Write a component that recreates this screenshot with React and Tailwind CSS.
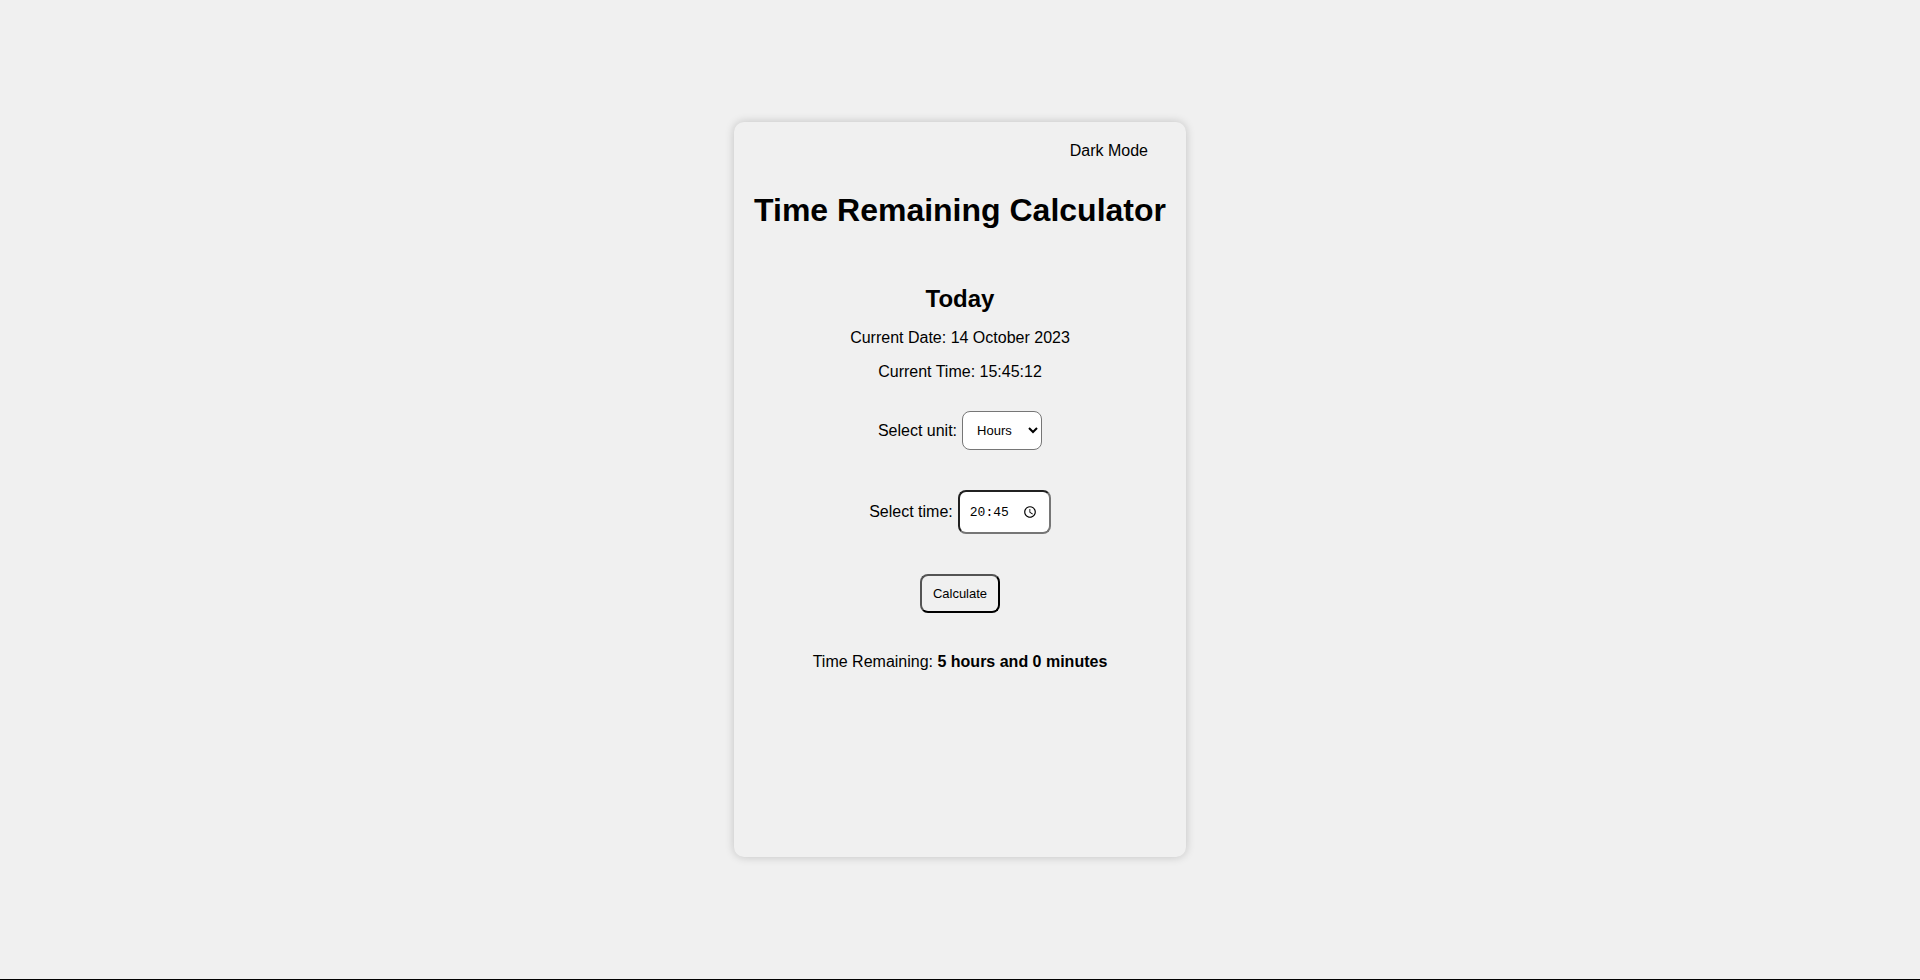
import { useState } from "react";

export default function App() {
  const [unit, setUnit] = useState("hours");
  const [time, setTime] = useState("20:45");

  return (
    <div className="flex min-h-screen flex-col items-center justify-center border-b border-black bg-[#f0f0f0] font-['Liberation_Sans',Arial,sans-serif] text-base leading-[18px] text-black">
      <main className="flex min-h-[75vh] flex-col items-center rounded-[10px] px-5 py-5 shadow-[0_0_10px_rgba(0,0,0,0.2)]">
        <button type="button" className="mr-[18px] self-end">
          Dark Mode
        </button>
        <h1 className="mt-8 text-[32px] leading-9 font-bold">Time Remaining Calculator</h1>
        <h2 className="mt-[57px] text-2xl leading-7 font-bold">Today</h2>
        <p className="mt-4">Current Date: 14 October 2023</p>
        <p className="mt-4">Current Time: 15:45:12</p>
        <div className="mt-[30px] flex items-center gap-[5px]">
          <label htmlFor="unit">Select unit:</label>
          <select
            id="unit"
            value={unit}
            onChange={(e) => setUnit(e.target.value)}
            className="h-[39px] w-20 rounded-lg border border-[#767676] bg-white px-2.5 text-[13px]"
          >
            <option value="hours">Hours</option>
            <option value="minutes">Minutes</option>
          </select>
        </div>
        <div className="mt-10 flex items-center gap-[5px]">
          <label htmlFor="time">Select time:</label>
          <div className="flex h-11 w-[93px] items-center justify-between rounded-lg border-2 [border-style:inset] border-[#767676] bg-white pr-3 pl-2.5">
            <input
              id="time"
              type="text"
              inputMode="numeric"
              maxLength={5}
              value={time}
              onChange={(e) => setTime(e.target.value)}
              className="w-11 bg-transparent pt-0.5 font-['Liberation_Mono',monospace] text-[13px] outline-none"
            />
            <svg viewBox="0 0 24 24" className="size-[14px]" fill="currentColor" aria-hidden="true">
              <path d="M12 2C6.5 2 2 6.5 2 12s4.500 10 10 10 10-4.500 10-10S17.500 2 12 2zm0 18c-4.410 0-8-3.590-8-8s3.590-8 8-8 8 3.590 8 8-3.590 8-8 8zm.500-13H11v6l5.200 3.200.800-1.300-4.500-2.700V7z" />
            </svg>
          </div>
        </div>
        <button
          type="button"
          className="mt-10 h-[39px] w-20 rounded-lg border-2 [border-style:outset] border-black text-[13px]"
        >
          Calculate
        </button>
        <p className="mt-10">
          Time Remaining: <strong>5 hours and 0 minutes</strong>
        </p>
      </main>
    </div>
  );
}
